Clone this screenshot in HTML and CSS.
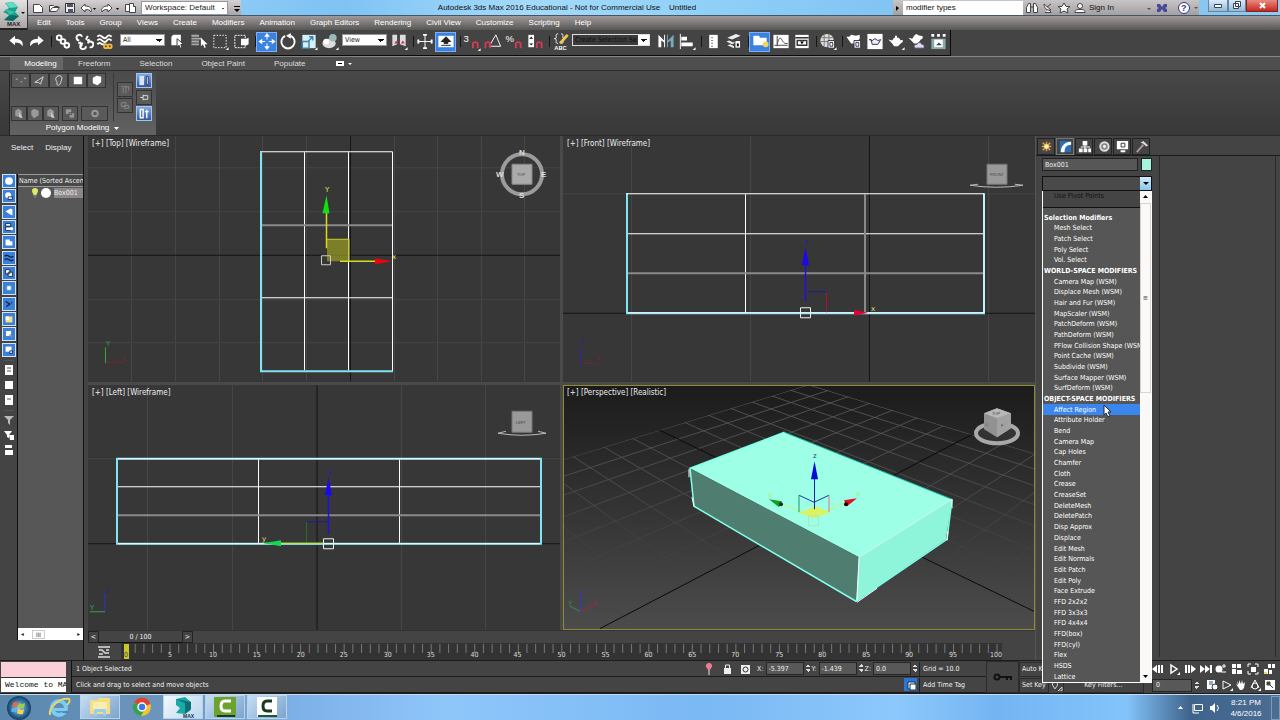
FILE: index.html
```html
<!DOCTYPE html>
<html lang="en">
<head>
<meta charset="utf-8">
<title>Autodesk 3ds Max 2016 Educational</title>
<link rel="stylesheet" href="styles.css">
</head>
<body>
<header class="head">
  <button class="app-btn" aria-label="Application menu">
    <svg width="27" height="28" viewBox="0 0 27 28"><path d="M5 3l8-1 5 5-3 5 4 4-6 5-9-1 5-5-6-3 6-4z" fill="#17a08c"/><path d="M5 3l8-1 5 5-8 1z" fill="#5fdcc2"/><path d="M10 15l9 1-6 5-9-1z" fill="#0a6d65"/><path d="M5 9l10 3-5 3z" fill="#37c3a9"/><path d="M21 12h4l-2 2z" fill="#111"/><text x="7" y="26" class="max">MAX</text></svg>
  </button>
  <div class="head-rows">
    <div class="titlebar">
      <div class="quick">
        <button aria-label="New"><svg width="12" height="12"><path d="M1.500 2.500h6l3 3v5h-9z" class="w"/></svg></button>
        <button aria-label="Open"><svg width="12" height="12"><path d="M1.500 9.500v-6h4l1 1h4M1.500 9.500l3-4h7l-3 4z" class="w"/></svg></button>
        <button aria-label="Save"><svg width="12" height="12"><path d="M1.500 1.500h9v9h-9z" fill="#eee" stroke="#333"/><path d="M3 2h6v3H3zM4 7h5v4H4z" fill="#556"/></svg></button>
        <button aria-label="Undo"><svg width="16" height="12"><path d="M1 6l4-4v2c5 0 7 2 6 6-1-2-3-3-6-2v2z" class="w"/><path d="M13 6h3l-1.500 2z"/></svg></button>
        <button aria-label="Redo"><svg width="20" height="12"><path d="M12 6L8 2v2C3 4 1 6 2 10c1-2 3-3 6-2v2z" class="w"/><path d="M16 6h3l-1.500 2z"/></svg></button>
        <button aria-label="Project folder"><svg width="13" height="12"><path d="M1.500 2.500h4v7h-4zM5.500 1.500h4v3h2v6h-6z" class="w"/></svg></button>
        <select class="workspace" aria-label="Workspace"><option>Workspace: Default</option></select>
        <button aria-label="Customize toolbar"><svg width="9" height="12"><path d="M2 4h6v1H2zM2 7h6L5 10z"/></svg></button>
      </div>
      <h1 class="title">Autodesk 3ds Max 2016 Educational - Not for Commercial Use &nbsp;&nbsp; Untitled</h1>
      <div class="info">
        <svg width="8" height="12"><path d="M3 4l3 2-3 3z"/></svg>
        <input class="search" type="text" value="modifier types" aria-label="Search">
        <button aria-label="Search"><svg width="14" height="12"><path d="M1.500 10.500v-5l2-4h2v9zM8.500 10.500v-9h2l2 4v5zM5 5h4" class="w"/></svg></button>
        <button aria-label="Communication"><svg width="14" height="12"><path d="M3 2c0 4 3 7 7 6zM6 5l4-3M4 10.500h6l-2-3" class="w"/></svg></button>
        <button aria-label="Favorites"><svg width="14" height="12"><path d="M7 1l2 3.500h4l-3 2.500 1 4-4-2-4 2 1-4-3-2.500h4z" class="w"/></svg></button>
        <button class="sign"><svg width="14" height="12"><circle cx="7" cy="4" r="2.500" class="w"/><path d="M2 10.500c0-3 2-3 5-3s5 0 5 3z" class="w"/></svg>Sign In</button>
        <svg class="push" width="8" height="12"><path d="M2 6h4L4 8z" fill="#555"/></svg>
        <button aria-label="Exchange"><svg width="14" height="12"><path d="M2 2h3l2 3 2-3h3v3l-2 1 2 1v3H9L7 7l-2 3H2V7l2-1-2-1z" fill="#4a4a9a"/></svg></button>
        <button aria-label="Help"><svg width="28" height="14"><circle cx="13" cy="7" r="5.500" fill="#fff" stroke="#338"/><text x="10" y="10" class="q">?</text><path d="M23 6h4l-2 2z" fill="#555"/></svg></button>
      </div>
      <div class="win">
        <button aria-label="Minimize"><svg width="18" height="11"><path d="M5.500 4.500h7v3h-7z" fill="#fff" stroke="#345"/></svg></button>
        <button aria-label="Restore"><svg width="16" height="11"><path d="M6.500 1.500h5v5h-5zM4.500 3.500h5v5h-5z" fill="#fff" stroke="#345"/></svg></button>
        <button class="close" aria-label="Close"><svg width="30" height="11"><path d="M13 3l5 5M18 3l-5 5" stroke="#fff" stroke-width="2"/></svg></button>
      </div>
    </div>
    <nav class="menu">
      <button>Edit</button><button>Tools</button><button>Group</button><button>Views</button><button>Create</button><button>Modifiers</button><button>Animation</button><button>Graph Editors</button><button>Rendering</button><button>Civil View</button><button>Customize</button><button>Scripting</button><button>Help</button>
    </nav>
  </div>
</header>

<div class="toolbar-row">
  <div class="toolbar" role="toolbar" aria-label="Main toolbar">
    <button aria-label="Undo"><svg viewBox="0 0 20 20"><path d="M3 9l6-5v3c6 0 9 3 8 8-2-3-4-4-8-4v3z" class="f"/></svg></button>
    <button aria-label="Redo"><svg viewBox="0 0 20 20"><path d="M17 9l-6-5v3c-6 0-9 3-8 8 2-3 4-4 8-4v3z" class="f"/></svg></button>
    <i class="sep"></i>
    <button aria-label="Link"><svg viewBox="0 0 20 20"><g class="s" stroke-width="2"><circle cx="6" cy="6" r="2.500"/><circle cx="10" cy="10" r="2.500"/><circle cx="14" cy="14" r="2.500"/></g></svg></button>
    <button aria-label="Unlink"><svg viewBox="0 0 20 20"><g class="s" stroke-width="2"><path d="M8 5a3 3 0 1 0-3 4M9 12a3 3 0 1 0 3 3M14 4l-2 4M16 8l-3 1M4 12l3-1M6 16l2-3M14 12a3 3 0 1 1 2 4"/></g></svg></button>
    <button aria-label="Bind to space warp"><svg viewBox="0 0 20 20"><path d="M2 5q2-3 5 0t5 0 5 0M2 9q2-3 5 0t5 0 5 0M2 13q2-3 5 0h4" class="s" stroke-width="2"/><g fill="none" stroke="#f0b93a" stroke-width="2"><circle cx="11" cy="15" r="2"/><circle cx="15" cy="15" r="2"/></g></svg></button>
    <select class="filter" aria-label="Selection filter"><option>All</option></select>
    <button aria-label="Select object"><svg viewBox="0 0 20 20"><path d="M3 5l2-2h8v9l-2 2H3z" class="f"/><path d="M9 7v9l2-2 2 4 1-1-1-4h3z" class="f" stroke="#333"/></svg></button>
    <button aria-label="Select by name"><svg viewBox="0 0 20 20"><path d="M2 4h8M2 7h11M2 10h8M2 13h8" stroke="#aaa" stroke-width="2"/><path d="M12 6v9l2-2 2 4 1-1-1-3h3z" class="f"/></svg></button>
    <button aria-label="Rectangular region"><svg viewBox="0 0 20 20"><path d="M3.500 3.500h13v13h-13z" class="s" stroke-dasharray="1.500 1.500"/><path d="M19 16v3h-3z" class="f"/></svg></button>
    <button aria-label="Window crossing"><svg viewBox="0 0 20 20"><path d="M3.500 3.500h11v13h-11z" class="s" stroke-dasharray="2 1"/><path d="M10 7h6l2-1v7l-2 1h-6z" class="f"/></svg></button>
    <i class="sep"></i>
    <button class="on" aria-label="Select and move"><svg viewBox="0 0 20 20"><path d="M10 3v14M3 10h14" class="s"/><path d="M10 1l3 4H7zM10 19l3-4H7zM1 10l4-3v6zM19 10l-4-3v6z" class="f"/><path d="M8 8h4v4H8z" fill="#3b82e0"/></svg></button>
    <button aria-label="Select and rotate"><svg viewBox="0 0 20 20"><path d="M7 4a7 7 0 1 0 6 0" class="s" stroke-width="2"/><path d="M13 1v6l-5-3z" class="f"/></svg></button>
    <button aria-label="Select and scale"><svg viewBox="0 0 20 20"><path d="M3 3h14v14H3z" fill="#d6f0fa"/><path d="M3 10h7v7H3zM9 10l5-5M10 5h4v4" fill="none" stroke="#3a86b0" stroke-width="1.500"/><path d="M19 16v3h-3z" class="f"/></svg></button>
    <button aria-label="Select and place"><svg viewBox="0 0 20 20"><ellipse cx="9" cy="12" rx="7" ry="5" fill="#ddd"/><circle cx="13" cy="6" r="4" fill="#9bb"/><circle cx="6" cy="10" r="3" fill="#fff"/><path d="M19 16v3h-3z" class="f"/></svg></button>
    <select class="view" aria-label="Reference coordinate system"><option>View</option></select>
    <button aria-label="Use pivot point center"><svg viewBox="0 0 20 20"><path d="M3 3h5v10l-5 2zM11 3h6v12l-6-2z" fill="#ddd"/><path d="M5 12l2-3 2 3zM12 12l2-3 2 3z" fill="#c34"/><path d="M19 16v3h-3z" class="f"/></svg></button>
    <i class="sep"></i>
    <button aria-label="Manipulate"><svg viewBox="0 0 20 20"><path d="M10 3v14M3 10h14" class="s"/><path d="M8 3h4M8 17h4M3 8v4M17 8v4" class="s" stroke-width="2"/></svg></button>
    <button class="on" aria-label="Keyboard override"><svg viewBox="0 0 20 20"><path d="M2 4h16v12H2z" class="f"/><path d="M10 5l5 5h-3v2H8v-2H5zM5 14h10" stroke="#222" fill="#222"/></svg></button>
    <i class="sep"></i>
    <button aria-label="Snaps toggle"><svg viewBox="0 0 20 20"><text x="1" y="10" class="ic">3</text><path d="M11 17v-5a3 3 0 0 1 5 0v5" class="mag"/><path d="M19 17v3h-3z" class="f"/></svg></button>
    <button aria-label="Angle snap"><svg viewBox="0 0 20 20"><path d="M6 15L13 3l5 12H8" class="s"/><path d="M2 17v-5a3 3 0 0 1 5 0v5" class="mag"/></svg></button>
    <button aria-label="Percent snap"><svg viewBox="0 0 20 20"><text x="1" y="10" class="ic">%</text><path d="M12 17v-5a3 3 0 0 1 5 0v5" class="mag"/></svg></button>
    <button aria-label="Spinner snap"><svg viewBox="0 0 20 20"><path d="M3 3h6v13H3z" class="f"/><path d="M4 7h4L6 5zM4 12h4l-2 2z"/><path d="M12 17v-5a3 3 0 0 1 5 0v5" class="mag"/></svg></button>
    <i class="sep"></i>
    <button aria-label="Edit named selections"><svg viewBox="0 0 20 20"><path d="M7 2c-3 0-2 2-2 3s0 2-2 2c2 0 2 1 2 2s-1 3 2 3M10 2c3 0 2 2 2 3s0 2 2 2c-2 0-2 1-2 2s1 3-2 3" class="s"/><path d="M17 3l-8 9" stroke="#f1c84b" stroke-width="3"/><text x="3" y="19" class="abc">ABC</text></svg></button>
    <select class="sets" aria-label="Named selection sets"><option>Create Selection Se</option></select>
    <button aria-label="Mirror"><svg viewBox="0 0 20 20"><path d="M2 3l6 6V3h1v13H8v-5l-3-2v7H2z" class="f"/><path d="M18 3l-6 6V3h-1v13h1v-5l3-2v7h3z" fill="#7ab"/></svg></button>
    <button aria-label="Align"><svg viewBox="0 0 20 20"><path d="M3 2v16" class="s"/><path d="M4 5h6v4H4zM4 11h12v4H4z" class="f"/><path d="M19 16v3h-3z" class="f"/></svg></button>
    <i class="sep"></i>
    <button aria-label="Layer explorer"><svg viewBox="0 0 20 20"><path d="M6 3h9v14H6z" class="f"/><path d="M8 6h2M8 9h2M8 12h2M8 15h2" stroke="#777"/></svg></button>
    <button aria-label="Layers"><svg viewBox="0 0 20 20"><path d="M3 6l9-4 5 2-9 4zM2 10l3-1 4 2 6-3v2l-7 3zM3 14l3-1 4 2v2z" fill="#eee"/><path d="M11 9h6v8h-6z" fill="#fff" stroke="#333"/><path d="M13 12h2v3h-2z"/></svg></button>
    <i class="sep"></i>
    <button class="on" aria-label="Toggle ribbon"><svg viewBox="0 0 20 20"><path d="M3 4h6l1 2h7v8H3z" class="f"/><circle cx="16" cy="13" r="3" fill="#f6d458"/></svg></button>
    <button aria-label="Curve editor"><svg viewBox="0 0 20 20"><path d="M2 3h16v14H2z" class="f"/><path d="M6 4v11M3 14h14M6 13c3-12 5-4 6-3s2 3 5 2" fill="none" stroke="#444"/></svg></button>
    <button aria-label="Schematic view"><svg viewBox="0 0 20 20"><path d="M3 3h14v14H3z" class="f"/><path d="M3 6h14M5 9h10v5H5z" fill="none" stroke="#333" stroke-width="1.500"/><path d="M8 10h4l-2 3z"/></svg></button>
    <i class="sep"></i>
    <button aria-label="Material editor"><svg viewBox="0 0 20 20"><circle cx="9" cy="9" r="7" fill="#ddd"/><path d="M3 6h12M2 10h14M6 3v12M11 2v14" stroke="#777"/><path d="M10 9h7v8h-7z" class="f" stroke="#333"/><path d="M12 11h3v4h-3z" fill="none" stroke="#335"/><path d="M19 16v3h-3z" class="f"/></svg></button>
    <i class="sep"></i>
    <button aria-label="Render setup"><svg viewBox="0 0 20 20"><path d="M2 5h3l2-2 5 1 4-1v4l-5 5H7z" class="f"/><path d="M10 9h7v8h-7z" class="f" stroke="#333"/><path d="M12 11h3v4h-3z" fill="none" stroke="#335"/></svg></button>
    <button aria-label="Rendered frame"><svg viewBox="0 0 20 20"><path d="M2 2h16v16H2z" class="f"/><path d="M4 8h2l1 5h6l3-5-3 1-3-2-3 2z" fill="#eef" stroke="#334"/></svg></button>
    <button aria-label="Render production"><svg viewBox="0 0 20 20"><path d="M2 8l4 1 2-3h1V4h2v2h2l2 3c3-2 3 2 0 3l-3 3H8L6 12z" class="f"/><path d="M19 16v3h-3z" class="f"/></svg></button>
    <button aria-label="Render in cloud"><svg viewBox="0 0 20 20"><path d="M1 6l4 1 2-3 2-2 4 2c4-1 4 3 1 4l-3 4H7z" class="f"/><path d="M8 17c-3-3 1-4 2-4 1-3 5-2 5 0 3 0 3 3 2 4z" fill="#dde" stroke="#447"/></svg></button>
    <button aria-label="Render gallery"><svg viewBox="0 0 20 20"><path d="M3 2h3v3H3zM9 2h3v3H9zM15 2h3v3h-3z" class="f"/><path d="M3 7h15v11H3z" fill="#8aa"/><path d="M6 8h9v8H6z" class="f"/><path d="M8 14l3-3 3 3z" fill="#345"/></svg></button>
  </div>
</div>

<nav class="tabs">
  <button class="active">Modeling</button><button>Freeform</button><button>Selection</button><button>Object Paint</button><button>Populate</button>
  <button aria-label="Ribbon options"><svg width="18" height="8"><path d="M1 1h8v5H1z" fill="#fff"/><path d="M3 3h4v1H3z"/><path d="M13 3h4l-2 2z" fill="#fff"/></svg></button>
</nav>

<section class="ribbon">
  <div class="poly">
    <div class="poly-body">
      <div class="poly-left">
        <div class="five"><button aria-label="Vertex"><svg viewBox="0 0 18 14"><path d="M4 5h2v1H4zM9 8h2v1H9zM13 4h2v1h-2z" fill="#ccc"/></svg></button><button aria-label="Edge"><svg viewBox="0 0 18 14"><path d="M4 9l9-6-3 8-2-2z" fill="none" stroke="#ddd"/></svg></button><button aria-label="Border"><svg viewBox="0 0 18 14"><path d="M7 3c4-3 7 0 5 4-1 5-3 6-5 4 2-3-3-4 0-8z" fill="none" stroke="#ddd"/></svg></button><button aria-label="Polygon"><svg viewBox="0 0 18 14"><path d="M5 3h9v8H5z" fill="#fff"/></svg></button><button aria-label="Element"><svg viewBox="0 0 18 14"><path d="M5 4l4-2 5 1v6l-4 3-5-2z" fill="#fff"/></svg></button></div>
        <div class="low"><button aria-label="Stack"><svg viewBox="0 0 14 14"><path d="M3 4l3-2 4 2v7l-7-1z" class="d"/><path d="M7 5v6l4 1z" fill="#ccc"/></svg></button><button aria-label="Stack next"><svg viewBox="0 0 14 14"><path d="M3 4l3-2 5 2v5l-5 3-3-3z" class="d"/></svg></button><button aria-label="Stack up"><svg viewBox="0 0 14 14"><path d="M3 4l3-2 4 2v7l-7-1z" class="d"/><path d="M7 5v6l4 1z" fill="#ccc"/></svg></button><button class="gap" aria-label="Preview"><svg viewBox="0 0 14 14"><path d="M2 2h7v6H2zM6 6h6v6H6z" class="d" stroke="#555"/></svg></button><button class="wide" aria-label="Settings"><svg viewBox="0 0 14 14"><circle cx="7" cy="7" r="3" fill="none" stroke="#999" stroke-width="2"/></svg></button></div>
      </div>
      <div class="two"><button aria-label="Pin stack"><svg viewBox="0 0 14 14"><path d="M3 4h8M5 5v6M8 4v7M11 4v4" stroke="#888"/></svg></button><button aria-label="Show end"><svg viewBox="0 0 14 14"><path d="M3 4h5v4H3zM6 7h5v3H6z" fill="none" stroke="#888"/></svg></button></div>
      <div class="three"><button class="blue" aria-label="Preview off"><svg viewBox="0 0 14 14"><path d="M2 2h5v10H2z" fill="#d7e5ff"/><path d="M9.500 2.500h2v9h-2z" fill="#fff" stroke="#235"/></svg></button><button aria-label="Preview subobject"><svg viewBox="0 0 14 14"><path d="M3 7h3M6 4v6M6 5h5v4H6" fill="none" stroke="#ddd"/></svg></button><button class="blue" aria-label="Preview multi"><svg viewBox="0 0 14 14"><path d="M3 2.500h3v9H3zM10 3v9M8 5h4" fill="none" stroke="#fff" stroke-width="1.500"/></svg></button></div>
    </div>
    <button class="poly-title">Polygon Modeling <svg width="7" height="5"><path d="M1 1h5L3.500 4z" fill="#fff"/></svg></button>
  </div>
</section>

<main class="work">
  <aside class="explorer">
    <nav class="ex-menu"><button>Select</button><button>Display</button></nav>
    <div class="ex-body">
      <div class="ex-tools">
        <div class="ex-filters">
          <button aria-label="Geometry"><svg viewBox="0 0 14 14"><circle cx="7" cy="7" r="4.500" class="f"/></svg></button>
          <button aria-label="Shapes"><svg viewBox="0 0 14 14"><circle cx="6" cy="6" r="3.500" class="f"/><path d="M6 8h5v3H6z" fill="#fff" stroke="#124"/></svg></button>
          <button aria-label="Lights"><svg viewBox="0 0 14 14"><path d="M3 6l6-3 2 1v7L7 9z" class="f"/></svg></button>
          <button aria-label="Cameras"><svg viewBox="0 0 14 14"><path d="M3 3h6v3H3zM3 7h7v4H3z" fill="#fff" stroke="#124"/><circle cx="10" cy="9" r="2" fill="#fff"/></svg></button>
          <button aria-label="Helpers"><svg viewBox="0 0 14 14"><path d="M3 4h5v2h3v5H3z" class="f"/></svg></button>
          <button aria-label="Space warps"><svg viewBox="0 0 14 14"><path d="M2 5q2-2 5 0t5 0M2 9q2-2 5 0t5 0" fill="none" stroke="#124" stroke-width="1.500"/></svg></button>
          <button aria-label="Groups"><svg viewBox="0 0 14 14"><path d="M3 3h5v5H3zM6 6h5v5H6z" fill="#fff" stroke="#124"/></svg></button>
          <button aria-label="Object xrefs"><svg viewBox="0 0 14 14"><path d="M4.500 4.500h5v5h-5z" fill="#fff" stroke="#6ab"/></svg></button>
          <button aria-label="Bones"><svg viewBox="0 0 14 14"><path d="M3 4l5 3-4 3M10 5v1" fill="none" stroke="#124" stroke-width="1.500"/></svg></button>
          <button aria-label="Containers"><svg viewBox="0 0 14 14"><path d="M3 4h8v7H3z" fill="#f7e08a"/><path d="M3 4h4v4H3z" fill="#fff"/></svg></button>
          <button aria-label="Frozen"><svg viewBox="0 0 14 14"><path d="M3 3h7v7H3zM8 8h3v3H8z" fill="#fff" stroke="#47a"/></svg></button>
          <button aria-label="Hidden"><svg viewBox="0 0 14 14"><path d="M3 3h7v6H3z" class="f"/><path d="M8 8h3v3H8z" fill="#fff" stroke="#124"/></svg></button>
        </div>
        <div class="ex-plain">
          <button aria-label="All"><svg viewBox="0 0 10 10"><path d="M1 0h8v10H1z" class="f"/><path d="M3 3h4M3 6h4" stroke="#555"/></svg></button>
          <button aria-label="None"><svg viewBox="0 0 10 10"><path d="M1 1h8v8H1z" class="f"/></svg></button>
          <button aria-label="Invert"><svg viewBox="0 0 10 10"><path d="M1 0h8v10H1z" class="f"/><path d="M3 4h4" stroke="#555"/></svg></button>
        </div>
        <div class="ex-plain last">
          <button aria-label="Filter"><svg viewBox="0 0 10 10"><path d="M0 1h10L6 5v5L4 8V5z" fill="#bbb"/></svg></button>
          <button aria-label="Filter selection"><svg viewBox="0 0 10 10"><path d="M0 1h8L5 5v3L3 7V5zM5 5h5v5H6z" class="f"/></svg></button>
          <button aria-label="Rows"><svg viewBox="0 0 10 10"><path d="M1 0h7v3H1zM1 5h8v5H1z" class="f"/></svg></button>
        </div>
      </div>
      <div class="ex-list">
        <div class="ex-head">Name (Sorted Ascending)</div>
        <div class="ex-item"><svg width="28" height="12"><path d="M5 1a3 3 0 0 1 3 3c0 2-2 3-2 6H4c0-3-2-4-2-6a3 3 0 0 1 3-3z" fill="#dfe86a"/><path d="M4 8h2v3H4z" fill="#776"/><circle cx="16" cy="6" r="5" fill="#fff"/></svg><span>Box001</span></div>
        <div class="ex-scroll"><i>◂</i><b>III</b><i>▸</i></div>
      </div>
    </div>
  </aside>

  <section class="center">
    <div class="views">
      <div class="vp"><span class="vl">[+] [Top] [Wireframe]</span>
        <svg viewBox="88 136 472 245">
          <path d="M131.500 136v245M175.500 136v245M219.500 136v245M262.500 136v245M306.500 136v245M394.500 136v245M437.500 136v245M481.500 136v245M524.500 136v245M88 167.500h472M88 211.500h472M88 299.500h472M88 342.500h472" class="grid"/>
          <path d="M350.500 136v245M88 255h472" class="axis"/>
          <path d="M304.500 152v218M348.500 152v218M260 297.500h132" class="wire"/><path d="M260 225h132" class="wire2"/>
          <path d="M261 152v219h132" class="sel"/><path d="M260 151.500h132.500v219" class="wire"/>
          <path d="M327 239h22v22h-22z" fill="#9a9d22" opacity=".7"/><path d="M327 239h22v22" fill="none" stroke="#c8d020"/>
          <path d="M326.500 248v-36M340 261h35" stroke="#d8dc20" stroke-width="1.500"/><path d="M326.500 195l3 18h-7z" fill="#10e010"/><path d="M392 261l-17-3v6z" fill="#f00010"/>
          <path d="M321.500 255.500h9v9h-9z" fill="none" stroke="#ccc"/><text x="325" y="192" class="ax y">Y</text><text x="392" y="259" class="ax y">x</text>
          <circle cx="522" cy="174" r="20" fill="none" stroke="#9b9b9b" stroke-width="4"/><path d="M512 164h20v20h-20z" fill="#aaa" stroke="#888"/><text x="517" y="176" class="cube">TOP</text>
          <text x="519" y="155" class="comp">N</text><text x="519" y="198" class="comp">S</text><text x="496" y="177" class="comp">W</text><text x="541" y="177" class="comp">E</text>
          <path d="M105.500 347v16" stroke="#37a23a"/><path d="M106 362h18" stroke="#7a2430" stroke-dasharray="12 2"/><text x="106" y="346" class="ax" fill="#37a23a">Y</text><text x="122" y="361" class="ax" fill="#7a2430">x</text>
        </svg>
      </div>
      <div class="vp"><span class="vl">[+] [Front] [Wireframe]</span>
        <svg viewBox="563 136 472 245">
          <path d="M631.500 136v245M750.500 136v245M988.500 136v245M563 193.500h472" class="grid"/><path d="M869.500 136v245M563 313h472" class="axis"/>
          <path d="M745.500 194v118M627 233.500h357" class="wire"/><path d="M865 194v118M627 273h357" class="wire2"/>
          <path d="M627 193v120h357V193" class="sel"/><path d="M626 193.500h358v119M628 312.500h356" class="wire"/>
          <path d="M805.500 301v-38" stroke="#2010e0" stroke-width="1.500"/><path d="M805.500 247l3.500 18h-7z" fill="#1a08f0"/><path d="M808 291.500h18" stroke="#2018a0"/><path d="M826.500 292v20" stroke="#a01838"/>
          <path d="M868 312.500l-14-3v6z" fill="#e00038"/><path d="M800.500 307.500h10v10h-10z" fill="none" stroke="#eee"/><text x="804" y="244" class="ax" fill="#2418d0">z</text><text x="871" y="311" class="ax y">x</text>
          <path d="M987 164h20v20h-20z" fill="#999" stroke="#777"/><text x="990" y="176" class="cube">FRONT</text><path d="M978 184l-8 1q26 4 53 0l-8-1" fill="none" stroke="#bbb"/>
          <path d="M581.500 347v18" stroke="#2a22b0"/><path d="M582 363h17" stroke="#7a2430" stroke-dasharray="10 3"/><text x="580" y="344" class="ax" fill="#2a22b0">z</text><text x="597" y="361" class="ax" fill="#7a2430">x</text>
        </svg>
      </div>
      <div class="vp"><span class="vl">[+] [Left] [Wireframe]</span>
        <svg viewBox="88 385 472 245">
          <path d="M147.500 385v245M232.500 385v245M401.500 385v245M485.500 385v245M88 458.500h472" class="grid"/><path d="M317 385v245M88 543.500h472" class="axis"/>
          <path d="M258.500 459v84M399.500 459v84M117 486.500h423" class="wire"/><path d="M117 515h423" class="wire2"/>
          <path d="M117 458.500h424v85H117z" class="sel"/><path d="M118 458.500h422M118 543.500h422" class="wire"/>
          <path d="M328.500 534v-42" stroke="#2010e0" stroke-width="1.500"/><path d="M328.500 477l3.500 18h-7z" fill="#1a08f0"/><path d="M307 521.500h21" stroke="#2018a0"/><path d="M306.500 522v20" stroke="#287020"/>
          <path d="M263 543l18-3v6z" fill="#10d850"/><path d="M323.500 538.500h10v10h-10z" fill="none" stroke="#eee"/><path d="M281 543h42" stroke="#a8e020"/><text x="328" y="474" class="ax" fill="#2418d0">z</text><text x="262" y="541" class="ax y">y</text>
          <path d="M512 411h20v21h-20z" fill="#999" stroke="#777"/><text x="516" y="424" class="cube">LEFT</text><path d="M506 431l-8 2q24 4 48 0l-8-2" fill="none" stroke="#bbb"/>
          <path d="M105 594v17" stroke="#3830d0"/><path d="M90 611.500h15" stroke="#37a25a"/><text x="105" y="593" class="ax" fill="#2a22a0">z</text><text x="90" y="610" class="ax" fill="#37a25a">Y</text>
        </svg>
      </div>
      <div class="vp live"><span class="vl">[+] [Perspective] [Realistic]</span>
        <svg viewBox="563 385 472 245">
          <defs>
            <linearGradient id="fade" gradientUnits="userSpaceOnUse" x1="0" y1="0" x2="0" y2="620"><stop offset="0" stop-color="#5c5c5c"/><stop offset=".5" stop-color="#505050"/><stop offset="1" stop-color="#484848" stop-opacity="0"/></linearGradient>
            <clipPath id="plane"><path d="M747 13L3000 703V2000H-2000V851z"/></clipPath>
          </defs>
          <g transform="translate(560 380) scale(.33333)" clip-path="url(#plane)" fill="none" stroke-width="2.500">
            <path stroke="url(#fade)" d="M-1234-592L3136 745M-1234-592L2906 745M-1234-592L2677 745M-1234-592L2447 745M-1234-592L2218 745M-1234-592L1988 745M-1234-592L1759 745M-1234-592L1299 745M-1234-592L1070 745M-1234-592L840 745M-1234-592L611 745M-1234-592L381 745M2611-555L-1652 745M2611-555L-1399 745M2611-555L-1146 745M2611-555L-893 745M2611-555L-640 745M2611-555L-386 745M2611-555L-133 745M2611-555L373 745M2611-555L626 745M2611-555L879 745M2611-555L1132 745M2611-555L1385 745"/>
            <path stroke="#0a0a0a" stroke-width="3" d="M-1234-592L1529 745M2611-555L120 745"/>
          </g>
          <path d="M690 468l94-36 168 67-93 58z" fill="#9dffe5"/><path d="M690 468l169 89-3 44-162-95z" fill="#4f7e71"/><path d="M952 499l-93 58-3 44 90-62z" fill="#8ef5da"/>
          <path d="M784.500 432l-94.500 36 4 38 162 95 91-62 5-40" fill="none" stroke="#80ffea" stroke-width="1.500"/><path d="M859 557l-2 43M952 499v9M689 469v8M694 506l-2-9M857 602l20-14M947 540l1-9" stroke="#fff" fill="none"/><path d="M784.500 432L952 499" stroke="#18b9a4" fill="none"/><path d="M859 557l93-58" stroke="#d8fff5" fill="none"/>
          <path d="M799 513l16-7 15 6-16 6z" fill="#dcf35e"/><path d="M782 504l32 12 32-14" fill="none" stroke="#d0f470"/><path d="M808.500 515.500h10v10h-10z" fill="none" stroke="#a8e8bc"/>
          <path d="M799 495l15 7 15-7" fill="none" stroke="#1b3e9a"/><path d="M799 495v17" stroke="#1a9a60"/><path d="M829 495v17" stroke="#d47a88"/><path d="M814.500 509v-31" stroke="#1020b0"/><path d="M814.500 461l3.500 18h-7z" fill="#0808d8"/>
          <path d="M769 499l13 2-3 6z" fill="#10a020"/><circle cx="781" cy="504" r="2" fill="#123"/><path d="M857 498l-13 2 3 6z" fill="#e01020"/><circle cx="846" cy="504" r="2" fill="#200"/>
          <text x="813" y="458" class="ax" fill="#154080">z</text><text x="768" y="497" class="ax" fill="#b0e878">y</text><text x="856" y="496" class="ax" fill="#b0e878">x</text>
          <ellipse cx="997" cy="433" rx="21" ry="10" fill="#333" stroke="#a8a8a8" stroke-width="4"/><path d="M984 413l13-5 14 5v15l-14 9-13-8z" fill="#929292"/><path d="M984 413l13-5 14 5-14 5z" fill="#b8b8b8"/><path d="M997 418l14-5v15l-14 9z" fill="#a2a2a2"/><text x="992" y="415" class="cube">TOP</text><text x="986" y="426" class="cube">L</text><text x="1001" y="427" class="cube">F</text>
          <path d="M580.500 611v-16" stroke="#3830d0"/><path d="M580 611l-10-5" stroke="#3a8a4a"/><path d="M581 611l13-6" stroke="#a02838"/><text x="580" y="595" class="ax" fill="#3830d0">z</text><text x="568" y="606" class="ax" fill="#3a8a4a">Y</text><text x="593" y="605" class="ax" fill="#a02838">x</text>
        </svg>
      </div>
    </div>
    <div class="slider"><button>&lt;</button><span class="frame">0 / 100</span><button>&gt;</button></div>
    <div class="track">
      <button aria-label="Open mini curve editor"><svg width="14" height="14"><path d="M1 2h12M1 12h12M2 5h3l3 3h4M2 9h4M9 5h3" fill="none" stroke="#ddd" stroke-width="1.500"/></svg></button>
      <svg class="ticks" viewBox="0 0 915 17" preserveAspectRatio="xMinYMid meet">
        <defs><pattern id="tick" x="5" width="8.715" height="17" patternUnits="userSpaceOnUse"><path d="M.5 1v9" stroke="#777"/></pattern></defs>
        <path d="M0 0h882v17H0z" fill="#333"/><path d="M5 0h874v17H5z" fill="url(#tick)"/><path d="M3 1h5v15H3z" fill="#c9c72c"/>
        <g class="nums"><text x="5" y="14" fill="#443">0</text><text x="49" y="14">5</text><text x="92" y="14">10</text><text x="136" y="14">15</text><text x="180" y="14">20</text><text x="223" y="14">25</text><text x="267" y="14">30</text><text x="310" y="14">35</text><text x="354" y="14">40</text><text x="397" y="14">45</text><text x="441" y="14">50</text><text x="485" y="14">55</text><text x="528" y="14">60</text><text x="572" y="14">65</text><text x="615" y="14">70</text><text x="659" y="14">75</text><text x="702" y="14">80</text><text x="746" y="14">85</text><text x="789" y="14">90</text><text x="833" y="14">95</text><text x="876" y="14">100</text></g>
      </svg>
    </div>
  </section>

  <aside class="command">
    <div class="cmd-tabs">
      <button aria-label="Create"><svg viewBox="0 0 18 16"><path d="M9 3v10M4 8h10M5 4l8 8M13 4l-8 8" stroke="#f0a040" stroke-width="1.500"/><circle cx="9" cy="8" r="2.500" fill="#fff3a8"/></svg></button>
      <button class="cur" aria-label="Modify"><svg viewBox="0 0 18 16"><path d="M3 2h12v12H3z" fill="#2d6fb4"/><path d="M4 14C4 8 8 3 15 3v3c-5 0-7 3-7 8z" fill="#fff"/></svg></button>
      <button aria-label="Hierarchy"><svg viewBox="0 0 18 16"><path d="M7 2h5v5H7zM3 10h4v4H3zM8 10h4v4H8zM13 10h3v4h-3zM9 7h1v3H9zM5 8h10v1H5z" class="f"/></svg></button>
      <button aria-label="Motion"><svg viewBox="0 0 18 16"><circle cx="10" cy="8" r="4.500" fill="#888" stroke="#ddd" stroke-width="2"/><circle cx="10" cy="8" r="1.500" fill="#fff"/></svg></button>
      <button aria-label="Display"><svg viewBox="0 0 18 16"><path d="M3 2h12v9H3zM7 12h5v2H7z" class="f"/><path d="M7.500 4.500h4v4h-4z" fill="#fff" stroke="#333"/></svg></button>
      <button aria-label="Utilities"><svg viewBox="0 0 18 16"><path d="M4 14l7-8" stroke="#b09a9a" stroke-width="2"/><path d="M8 4l3-2 5 5-2 1-3-3z" fill="#ddd"/></svg></button>
    </div>
    <div class="cmd-body">
      <div class="stack">
        <div class="name-row"><input type="text" value="Box001" aria-label="Object name"><button class="swatch" aria-label="Object color"></button></div>
        <div class="mod">
          <button class="mod-combo" aria-haspopup="listbox" aria-expanded="true" aria-label="Modifier list"><i><svg width="11" height="12"><path d="M3 5h6L6 8z"/></svg></i></button>
          <div class="drop">
            <ul role="listbox" aria-label="Modifiers">
              <li class="dim">Use Pivot Points</li><li class="rule"></li><li class="h">Selection Modifiers</li><li>Mesh Select</li><li>Patch Select</li><li>Poly Select</li><li>Vol. Select</li><li class="h">WORLD-SPACE MODIFIERS</li><li>Camera Map (WSM)</li><li>Displace Mesh (WSM)</li><li>Hair and Fur (WSM)</li><li>MapScaler (WSM)</li><li>PatchDeform (WSM)</li><li>PathDeform (WSM)</li><li>PFlow Collision Shape (WSM)</li><li>Point Cache (WSM)</li><li>Subdivide (WSM)</li><li>Surface Mapper (WSM)</li><li>SurfDeform (WSM)</li><li class="h">OBJECT-SPACE MODIFIERS</li><li class="hot">Affect Region</li><li>Attribute Holder</li><li>Bend</li><li>Camera Map</li><li>Cap Holes</li><li>Chamfer</li><li>Cloth</li><li>Crease</li><li>CreaseSet</li><li>DeleteMesh</li><li>DeletePatch</li><li>Disp Approx</li><li>Displace</li><li>Edit Mesh</li><li>Edit Normals</li><li>Edit Patch</li><li>Edit Poly</li><li>Face Extrude</li><li>FFD 2x2x2</li><li>FFD 3x3x3</li><li>FFD 4x4x4</li><li>FFD(box)</li><li>FFD(cyl)</li><li>Flex</li><li>HSDS</li><li>Lattice</li>
            </ul>
            <div class="bar"><svg width="11" height="12"><path d="M3 7h5L5.500 4z"/></svg><i class="thumb">≡</i><svg width="11" height="12"><path d="M3 5h5L5.500 8z"/></svg></div>
            <svg class="cursor" width="9" height="14"><path d="M1 0v10l2-2 2 4 2-1-2-4h3z" fill="#fff" stroke="#223"/></svg>
          </div>
        </div>
      </div>
      <div class="blank"></div>
    </div>
  </aside>
</main>

<footer class="status">
  <div class="listener"><div class="pink"></div><div class="white">Welcome to MAX</div></div>
  <div class="lines">
    <div class="line"><span class="msg">1 Object Selected</span>
      <svg width="54" height="14"><path d="M6 1a3 3 0 0 1 3 4l-3 4-3-4a3 3 0 0 1 3-4z" fill="#ee7a8e"/><path d="M6 8v5" stroke="#ddd"/><path d="M21 6h7v6h-7z" fill="#eee"/><path d="M22.500 6V3h4v3" fill="none" stroke="#eee"/><path d="M38 3h9v9h-9z" fill="#eee"/><circle cx="42.500" cy="7.500" r="2.500" fill="none" stroke="#333"/></svg>
      <label>X: <input type="text" value="-5.397"></label><i class="spin"></i><label>Y: <input type="text" value="-1.439"></label><i class="spin"></i><label>Z: <input type="text" value="0.0"></label><i class="spin"></i>
      <span class="gridsize">Grid = 10.0</span></div>
    <div class="line"><span class="msg">Click and drag to select and move objects</span><button class="iso" aria-label="Isolate selection"><svg width="12" height="12"><path d="M3 3h7v7H3z" fill="#fff" stroke="#135"/><path d="M5 5h6v6H5z" fill="#fff" stroke="#135"/></svg></button><button class="tag">Add Time Tag</button></div>
  </div>
  <button class="key" aria-label="Set keys"><svg width="20" height="10"><circle cx="4" cy="5" r="2.500" fill="none" stroke="#111" stroke-width="2"/><path d="M7 5h11v3M14 5v3" fill="none" stroke="#111" stroke-width="2"/></svg></button>
  <div class="keys">
    <div class="krow"><button>Auto Key</button><button>Selected</button></div>
    <div class="krow"><button>Set Key</button><svg width="14" height="12"><path d="M4 2q-2 4 2 8M8 2q2 4-2 8M13 8v4h-4z" fill="none" stroke="#ccc"/></svg><button>Key Filters...</button></div>
  </div>
  <div class="play">
    <div class="prow">
      <button aria-label="Previous frame"><svg viewBox="0 0 14 12"><path d="M1 6l5-4v8zM7 2h2v8H7zM10 2h2v8h-2z" class="f"/></svg></button>
      <button aria-label="Play"><svg viewBox="0 0 14 12"><path d="M4 2l6 4-6 4z" class="s" stroke-width="1.500"/><path d="M13 9v3h-3z" class="f"/></svg></button>
      <button aria-label="Next frame"><svg viewBox="0 0 14 12"><path d="M13 6L8 2v8zM2 2h2v8H2zM5 2h2v8H5z" class="f"/></svg></button>
      <button aria-label="Go to end"><svg viewBox="0 0 14 12"><path d="M1 2l5 4-5 4zM6 2l5 4-5 4zM11 2h2v8h-2z" class="f"/></svg></button>
      <button aria-label="Zoom"><svg viewBox="0 0 14 12"><circle cx="5" cy="6" r="3.500" class="f"/><path d="M8 3h4M10 1v4M7 9h5" class="s"/></svg></button>
      <button aria-label="Zoom all"><svg viewBox="0 0 14 12"><path d="M2 1h4v4H2zM7 1h4v4H7zM2 6h4v5H2zM7 7h5v4H7z" class="f"/></svg></button>
      <button aria-label="Zoom extents"><svg viewBox="0 0 14 12"><path d="M2 4V1h3M9 1h3v3M2 8v3h3M12 9v2H9" class="s"/><path d="M5 4h5v5H5z" class="f"/></svg></button>
      <button aria-label="Zoom extents all"><svg viewBox="0 0 14 12"><path d="M6 1h3v4H6zM10 1h3v4h-3zM2 6h4v5H2zM7 7h3v4H7z" class="f"/><path d="M2 9h3v2H2z" fill="#e8d870"/></svg></button>
    </div>
    <div class="prow">
      <input type="text" value="0" aria-label="Current frame"><i class="spin"></i>
      <button aria-label="Time configuration"><svg viewBox="0 0 14 12"><path d="M2 1h8v9H2z" class="f"/><path d="M4 3h4M4 5h4" stroke="#357"/><circle cx="10" cy="8" r="3" fill="#fff" stroke="#335"/></svg></button>
      <button aria-label="Field of view"><svg viewBox="0 0 14 12"><path d="M3 2l8 4-8 4z" class="s"/><path d="M13 9v3h-3z" class="f"/></svg></button>
      <button aria-label="Pan"><svg viewBox="0 0 14 12"><path d="M4 8L2 5l2 1-1-4 2 3V1l2 4 1-4 1 4 2-2-1 6-2 2H6z" class="f"/></svg></button>
      <button aria-label="Orbit"><svg viewBox="0 0 14 12"><circle cx="7" cy="7" r="3" class="s"/><path d="M3 9l4-8 4 8" class="s"/><path d="M13 9v3h-3z" class="f"/></svg></button>
      <button aria-label="Maximize viewport"><svg viewBox="0 0 14 12"><path d="M2 1h10v10H2z" class="f"/><path d="M4 3h3v3H4zM7 6l3 3" fill="#444" stroke="#444"/></svg></button>
    </div>
  </div>
</footer>

<footer class="taskbar">
  <button class="start" aria-label="Start"><svg width="26" height="26"><defs><radialGradient id="orb"><stop offset="0" stop-color="#8fd0ee"/><stop offset=".7" stop-color="#2d6a9c"/><stop offset="1" stop-color="#183c5e"/></radialGradient></defs><circle cx="13" cy="13" r="12" fill="url(#orb)"/><path d="M7 8q3-2 5 0l-1 4q-2-1-5 0z" fill="#ec6a33"/><path d="M13 8q3 2 6 0l-1 5q-3 1-6-1z" fill="#9bcf46"/><path d="M6 13q3-1 5 0l-1 5q-2-2-5-1z" fill="#5ab2ee"/><path d="M12 14q3 2 6 0l-1 5q-3 1-6-1z" fill="#fbd24b"/></svg></button>
  <button class="app flat" aria-label="Internet Explorer"><svg width="26" height="24"><circle cx="13" cy="13" r="7" fill="none" stroke="#78cdf4" stroke-width="4"/><path d="M7 13h13v3H8z" fill="#78cdf4"/><path d="M17 16h6v2h-7z" fill="#5b83ad"/><path d="M4 20C2 12 15 2 23 4q2 2-2 6" fill="none" stroke="#e8d564" stroke-width="2"/></svg></button>
  <button class="app" aria-label="Explorer"><svg width="26" height="24"><path d="M3 5h7l2-2h11v16H3z" fill="#f6dd82"/><path d="M6 7h14v8H6z" fill="#fbedb0"/><path d="M7 21v-7h12v7h-3v-4h-6v4z" fill="#9bd0ec"/></svg></button>
  <button class="app flat" aria-label="Chrome"><svg width="26" height="24"><circle cx="13" cy="12" r="9" fill="#f4c22d"/><path d="M13 12L5 7.500A9 9 0 0 1 21.500 9z" fill="#de4334"/><path d="M13 12L5 7.500A9 9 0 0 0 12 21l4-7z" fill="#36a154"/><circle cx="13" cy="12" r="4" fill="#3c7ae0" stroke="#fff" stroke-width="1.500"/></svg></button>
  <button class="app lit" aria-label="3ds Max"><svg width="26" height="24"><path d="M6 4l9-2 6 5-3 4 3 4-6 4-9-1 4-5-4-3z" fill="#19aaa4"/><path d="M6 4l9 4v11l6-5V7z" fill="#0c6e72"/><text x="13" y="23" class="mini">MAX</text></svg></button>
  <button class="app" aria-label="Camtasia Studio"><svg width="26" height="24"><path d="M2 2h22v20H2z" fill="#6ba32c"/><path d="M5 20h18v2H5z" fill="#123c1d"/><path d="M19 6h-6q-4 0-4 5t4 5h6" fill="none" stroke="#fff" stroke-width="3"/></svg></button>
  <button class="app" aria-label="Camtasia Recorder"><svg width="26" height="24"><path d="M3 2h20v20H3z" fill="#fff"/><path d="M4 20h19v2H4z" fill="#1b5a2b"/><path d="M18 6h-5q-4 0-4 5t4 5h5" fill="none" stroke="#173a20" stroke-width="3"/></svg></button>
  <div class="tray"><svg width="44" height="14"><path d="M1 8h5L3.500 5z" fill="#fff"/><path d="M17.500 3.500h8v6h-8zM16 12h6M16 3v9" fill="none" stroke="#fff"/><path d="M33 5h2l3-3v10l-3-3h-2z" fill="#fff"/><path d="M40 4q3 3 0 6" fill="none" stroke="#fff"/></svg><div class="clock"><span>8:21 PM</span><span>4/6/2016</span></div><button class="desk" aria-label="Show desktop"></button></div>
</footer>
</body>
</html>
```
FILE: styles.css
```css
* { box-sizing: border-box; }
html, body { height: 100%; }
body {
  margin: 0; display: flex; flex-direction: column; overflow: hidden;
  background: #444; color: #eee;
  font: 7px/10px "DejaVu Sans Condensed", "Liberation Sans", sans-serif;
}
button, input, select { font: inherit; color: inherit; margin: 0; padding: 0; border: 0; background: none; border-radius: 0; }
button { display: flex; align-items: center; justify-content: center; white-space: nowrap; }
input { min-width: 0; }
svg { display: block; flex: none; }
select { appearance: none; background: #fff no-repeat; color: #222; }
.w { fill: #fff; stroke: #444; }
.f { fill: #fff; }
.s { fill: none; stroke: #fff; }
.d { fill: #999; }
.mag { fill: none; stroke: #d33a55; stroke-width: 2; }
.ic { font: 10px "Liberation Sans", sans-serif; fill: #fff; }
.abc { font: bold 6px "Liberation Sans", sans-serif; fill: #fff; }
.max { font: bold 6px "Liberation Sans", sans-serif; fill: #222; }
.mini { font: bold 5px "Liberation Sans", sans-serif; fill: #134; }
.q { font: bold 9px "Liberation Sans", sans-serif; fill: #338; }

/* title and menu */
.head { display: flex; flex: none; height: 30px; background: #555; font: 8px/12px "Liberation Sans", sans-serif; }
.app-btn { width: 28px; background: linear-gradient(#e4e2e2, #a8a5a5); border-right: 1px solid #333; border-bottom: 2px solid #222; }
.head-rows { flex: 1; display: flex; flex-direction: column; min-width: 0; }
.titlebar { display: flex; height: 16px; border-bottom: 1px solid #456; background: linear-gradient(90deg, #a5d8f8, #7ec3f4 25%, #a4dafa 40%, #88ccf6 60%, #7ab9f0 80%, #90ccf0); color: #111; }
.quick { display: flex; align-items: center; gap: 4px; padding: 0 0 0 4px; background: linear-gradient(#d5d1d2, #aaa6a8); }
.workspace { width: 87px; height: 14px; padding-left: 3px; border: 1px solid #999; background-image: linear-gradient(#555, #555); background-size: 2px 1px; background-position: 80px 6px; }
.title { flex: 1; margin: 0; padding-top: 1px; text-align: center; font: 8px/14px "Liberation Sans", sans-serif; white-space: nowrap; }
.info { display: flex; align-items: center; gap: 2px; width: 306px; background: linear-gradient(#c8c5c7, #a4a0a2); }
.search { width: 120px; height: 14px; background: #fff; color: #111; padding: 0 3px; }
.sign { gap: 2px; }
.push { margin-left: auto; }
.win { display: flex; align-items: flex-start; padding: 0 2px 0 9px; }
.win button { border: 1px solid #6484a4; border-top: 0; background: linear-gradient(#d9ecfa, #98b8d4); }
.win .close { background: linear-gradient(#e98a80, #c8281f); border-color: #7c2620; }
.menu { display: flex; align-items: center; gap: 15px; height: 14px; padding-left: 9px; color: #fff; background: linear-gradient(#a09a9a, #575555); }

/* main toolbar */
.toolbar-row { flex: none; height: 26px; background: #444; }
.toolbar { display: flex; align-items: center; width: max-content; height: 26px; padding: 0 2px 2px 5px; border-right: 1px solid #0a0a0a; border-bottom: 1px solid #0a0a0a; }
.toolbar button { width: 21px; height: 20px; }
.toolbar button svg { width: 20px; height: 19px; }
.toolbar .on { background: #3b82e0; outline: 1px solid #7cb0f4; outline-offset: -1px; }
.sep { width: 5px; height: 11px; border-right: 1px solid #151515; }
.toolbar select {
  width: 45px; height: 12px; margin: 0 2px 4px 5px; padding-left: 2px; border: 1px solid #999;
  background-image: conic-gradient(from -45deg at 50% 100%, #111 90deg, transparent 0);
  background-size: 6px 3px; background-position: right 2px top 4px;
}
.toolbar .view { margin: 0 1px 4px 2px; }
.toolbar .sets {
  width: 78px; margin: 0 5px 4px 1px; background-color: #3c3c3c; color: #0c0c0c; border-color: #ddd;
  background-image: conic-gradient(from -45deg at 50% 100%, #111 90deg, transparent 0), linear-gradient(#fff, #fff);
  background-size: 6px 3px, 11px 12px; background-position: right 2px top 4px, right 0 top 0;
}

/* ribbon */
.tabs { display: flex; flex: none; height: 15px; padding-left: 10px; border-top: 1px solid #858585; border-bottom: 1px solid #2e2e2e; background: #4e4e4e; font: 8px/12px "Liberation Sans", sans-serif; color: #ddd; }
.tabs button { padding: 0 14px; }
.tabs button:nth-child(n+3) { padding: 0 14px 0 15px; }
.tabs .active { width: 53px; padding: 0 5px 0 13px; background: #666; color: #fff; }
.tabs button:nth-child(2) { margin-left: 1px; }
.ribbon { flex: none; height: 65px; padding-left: 9px; background: linear-gradient(#484848, #383838); border-bottom: 1px solid #2a2a2a; }
.poly { display: flex; flex-direction: column; width: 147px; height: 64px; border-left: 1px solid #222; background: linear-gradient(#4b4b4b, #626262); }
.poly-body { display: flex; flex: 1; padding: 2px 4px 0 1px; }
.poly-left { display: flex; flex-direction: column; justify-content: space-between; flex: 1; border-right: 1px solid #383838; }
.poly-left div { display: flex; }
.poly button { border: 1px solid #333; background: #5a5a5a; }
.five button { width: 19px; height: 15px; }
.five svg { width: 17px; height: 13px; }
.low button, .two button, .three button { width: 16px; height: 15px; }
.low svg, .two svg, .three svg { width: 14px; height: 13px; }
.low .gap { margin: 0 3px; }
.poly .low .wide { width: 27px; }
.two { display: flex; flex-direction: column; justify-content: center; gap: 1px; padding: 0 3px; }
.three { display: flex; flex-direction: column; justify-content: space-between; }
.poly .three .blue { background: linear-gradient(#7ea8e6, #35589c); border-color: #a5c4f2; }
.poly .poly-title { height: 14px; gap: 4px; border: 0; background: none; color: #fff; font: 8px/12px "Liberation Sans", sans-serif; }

/* scene explorer */
.work { display: flex; flex: 1; min-height: 0; }
.explorer { display: flex; flex-direction: column; width: 84px; margin-right: 4px; border-right: 1px solid #111; }
.ex-menu { display: flex; gap: 12px; padding: 6px 0 0 11px; height: 38px; align-items: flex-start; font: 8px/12px "Liberation Sans", sans-serif; }
.ex-body { display: flex; flex: 1; min-height: 0; padding-bottom: 20px; }
.ex-tools { width: 17px; display: flex; flex-direction: column; align-items: center; }
.ex-filters { display: grid; grid-auto-rows: 1fr; height: 184px; }
.ex-filters button { width: 14px; height: 14px; background: #3a7fd8; border: 1px solid #d4e4f8; }
.ex-filters svg { width: 12px; height: 12px; }
.ex-plain { display: flex; flex-direction: column; gap: 5px; margin-top: 2px; padding-top: 4px; border-top: 1px solid #555; }
.ex-plain.last { margin-top: 5px; }
.ex-plain svg { width: 10px; height: 10px; }
.ex-list { flex: 1; min-width: 0; display: flex; flex-direction: column; overflow: hidden; background: #575757; border-left: 1px solid #111; }
.ex-head { height: 13px; padding: 1px 0 0 1px; background: #484848; border: solid #999; border-width: 1px 0; white-space: nowrap; overflow: hidden; }
.ex-item { display: flex; align-items: center; padding-left: 12px; }
.ex-item svg { width: 24px; }
.ex-item span { flex: 1; background: #8c8788; }
.ex-scroll { display: flex; justify-content: space-between; align-items: center; height: 12px; margin-top: auto; padding: 0 3px; background: #fff; color: #222; font-size: 6px; }
.ex-scroll i { font-style: normal; }
.ex-scroll b { margin-right: 24px; padding: 0 3px; border: 1px solid #ccc; font-weight: normal; line-height: 7px; }

/* viewports */
.center { display: flex; flex-direction: column; flex: 1; min-width: 0; }
.views { display: grid; flex: 1; min-height: 0; grid-template-columns: 1fr 1fr; grid-template-rows: 1fr 1fr; gap: 3px; background: #4a4a4a; }
.vp { position: relative; overflow: hidden; background: #373737; min-height: 0; }
.vp > svg { width: 100%; height: 100%; }
.live { background: linear-gradient(#1b1b1b, #4c4c4c); outline: 1px solid #8f8c30; outline-offset: -1px; }
.vl { position: absolute; left: 4px; top: 3px; white-space: nowrap; font-size: 8px; }
.grid { stroke: #464646; fill: none; }
.axis { stroke: #141414; fill: none; }
.wire { stroke: #fff; fill: none; }
.wire2 { stroke: #8a8a8a; stroke-width: 2; fill: none; }
.sel { stroke: #80e4f2; stroke-width: 2; fill: none; }
.ax { font: 7px "DejaVu Sans", sans-serif; }
.y { fill: #e0e060; }
.cube { font: 4px "Liberation Sans", sans-serif; fill: #444; }
.comp { font: bold 8px "Liberation Sans", sans-serif; fill: #ddd; }
.slider { display: flex; flex: none; height: 13px; border-top: 1px solid #333; }
.slider button { width: 11px; border: 1px solid #222; }
.frame { width: 77px; text-align: center; border-bottom: 1px solid #111; line-height: 12px; }
.slider .frame { width: 83px; }
.track { display: flex; flex: none; height: 17px; overflow: hidden; }
.track button { width: 29px; padding-left: 2px; }
.track .ticks { flex: 1; min-width: 0; height: 17px; margin-left: 4px; }
.nums { font: 7px "DejaVu Sans Condensed", sans-serif; fill: #ddd; text-anchor: middle; }

/* command panel */
.command { display: flex; flex-direction: column; width: 245px; border-left: 1px solid #555; }
.cmd-tabs { display: flex; gap: 1px; padding: 2px 0 0 1px; height: 20px; border-bottom: 1px solid #1a1a1a; }
.cmd-tabs button { width: 18px; height: 17px; border: 1px solid #222; }
.cmd-tabs .cur { border-color: #777; }
.cmd-tabs svg { width: 17px; height: 15px; }
.cmd-body { display: flex; flex: 1; min-height: 0; }
.stack { width: 123px; padding: 2px 7px 0 6px; }
.name-row { display: flex; gap: 3px; height: 13px; margin-bottom: 5px; }
.name-row input { flex: 1; height: 13px; padding: 0 2px; background: #575757; border: 1px solid #222; }
.swatch { width: 11px; background: #a4f5de; border: 1px solid #222; }
.mod { position: relative; }
.mod-combo { width: 100%; height: 15px; justify-content: flex-end; background: #4a4a4a; border: 1px solid #111; }
.mod-combo i { height: 13px; background: linear-gradient(#d3ecfb, #88c8ee); }
.drop { position: absolute; z-index: 5; left: 0; right: 0; top: 15px; height: 492px; display: flex; background: #565656; border: solid #fff; border-width: 0 1px 1px; }
.drop ul { flex: 1; min-width: 0; margin: 0; padding: 0; list-style: none; display: flex; flex-direction: column; overflow: hidden; }
.drop li { flex: 1; display: flex; align-items: center; padding-left: 11px; white-space: nowrap; color: #fff; }
.drop .h { padding-left: 1px; font-weight: bold; }
.drop .dim { background: #454545; color: #111; }
.drop .rule { background: linear-gradient(#454545 5px, #111 5px, #111 6px, transparent 6px); }
.drop .hot { background: #3b86ec; }
.bar { display: flex; flex-direction: column; width: 11px; background: #fbf8f8; }
.thumb { height: 190px; display: flex; align-items: center; justify-content: center; border: 1px solid #dcd0d0; color: #444; font-style: normal; }
.bar svg:last-child { margin-top: auto; }
.cursor { position: absolute; left: 60px; top: 214px; }
.blank { flex: 1; margin: 0 4px 3px 0; border: solid #2a2a2a; border-width: 0 1px 0 1px; }

/* status */
.status { display: flex; flex: none; height: 34px; border-top: 1px solid #1c1c1c; border-bottom: 1px solid #1c1c1c; }
.listener { width: 67px; padding: 1px; display: flex; flex-direction: column; color: #111; font: 8px/14px "Liberation Mono", monospace; }
.pink { flex: 1; background: #fcd0d8; border-bottom: 1px solid #333; }
.white { flex: 1; padding-left: 4px; background: #fff; overflow: hidden; white-space: nowrap; }
.lines { flex: 1; min-width: 0; display: flex; flex-direction: column; margin-left: 4px; border-left: 1px solid #111; }
.line { flex: 1; display: flex; align-items: center; padding-left: 4px; border-bottom: 1px solid #1c1c1c; }
.msg { flex: 1; }
.line label { display: flex; align-items: center; }
.line input { width: 38px; height: 13px; margin-left: 2px; padding: 0 2px; background: #585858; border: 1px solid #262626; }
.spin { width: 8px; height: 9px; background: conic-gradient(from 135deg at 50% 0, #ddd 90deg, transparent 0) 2px 0 / 4px 3px no-repeat, conic-gradient(from -45deg at 50% 100%, #ddd 90deg, transparent 0) 2px 5px / 4px 3px no-repeat; }
.gridsize, .tag { width: 67px; padding-left: 3px; border-left: 1px solid #222; line-height: 14px; justify-content: flex-start; }
.iso { width: 13px; height: 13px; margin-right: 2px; background: #2d75d4; }
.key { width: 33px; border: 1px solid #2c2c2c; }
.keys { width: 131px; display: flex; flex-direction: column; overflow: hidden; }
.krow { flex: 1; display: flex; align-items: center; }
.krow button { height: 15px; padding: 0 2px; border: 1px solid #2c2c2c; }
.krow button:last-child { margin-left: auto; width: 94px; }
.krow svg + button:last-child { width: 92px; margin: 0 6px 0 0; }
.play { width: 130px; display: flex; flex-direction: column; }
.prow { flex: 1; display: flex; align-items: center; padding-right: 3px; }
.prow button { flex: 1; }
.prow svg { width: 14px; height: 12px; }
.prow input { width: 40px; height: 13px; margin-left: 2px; padding: 0 3px; background: #585858; border: 1px solid #262626; }
.prow .spin { margin: 0 4px 0 1px; }

/* taskbar */
.taskbar { display: flex; flex: none; height: 26px; padding-left: 5px; border-top: 1px solid #c8dcec; background: linear-gradient(90deg, #5a86ac, #7099c2 15%, #7eb0e8 23%, #8ec6fa 35%, #7ab8f4 55%, #8cc8fc 70%, #74b4f2 78%, #84c4fc 88%, #3f648c 93%, #4c6d92); }
.start { width: 27px; margin-right: 7px; }
.app { width: 40px; height: 24px; margin-right: 2px; border: 1px solid #b8d4ec; background: linear-gradient(135deg, #c5ddf3, #7ca4cb); }
.app.flat { border-color: transparent; background: none; margin-right: 1px; }
.app.lit { background: linear-gradient(135deg, #f2f8fd, #bcd7ee); }
.tray { display: flex; align-items: center; gap: 7px; margin-left: auto; color: #fff; font: 8px/11px "Liberation Sans", sans-serif; }
.clock { display: flex; flex-direction: column; align-items: center; width: 36px; }
.desk { width: 9px; height: 24px; border: 1px solid #7e9cba; background: #4c6d92; }
```
